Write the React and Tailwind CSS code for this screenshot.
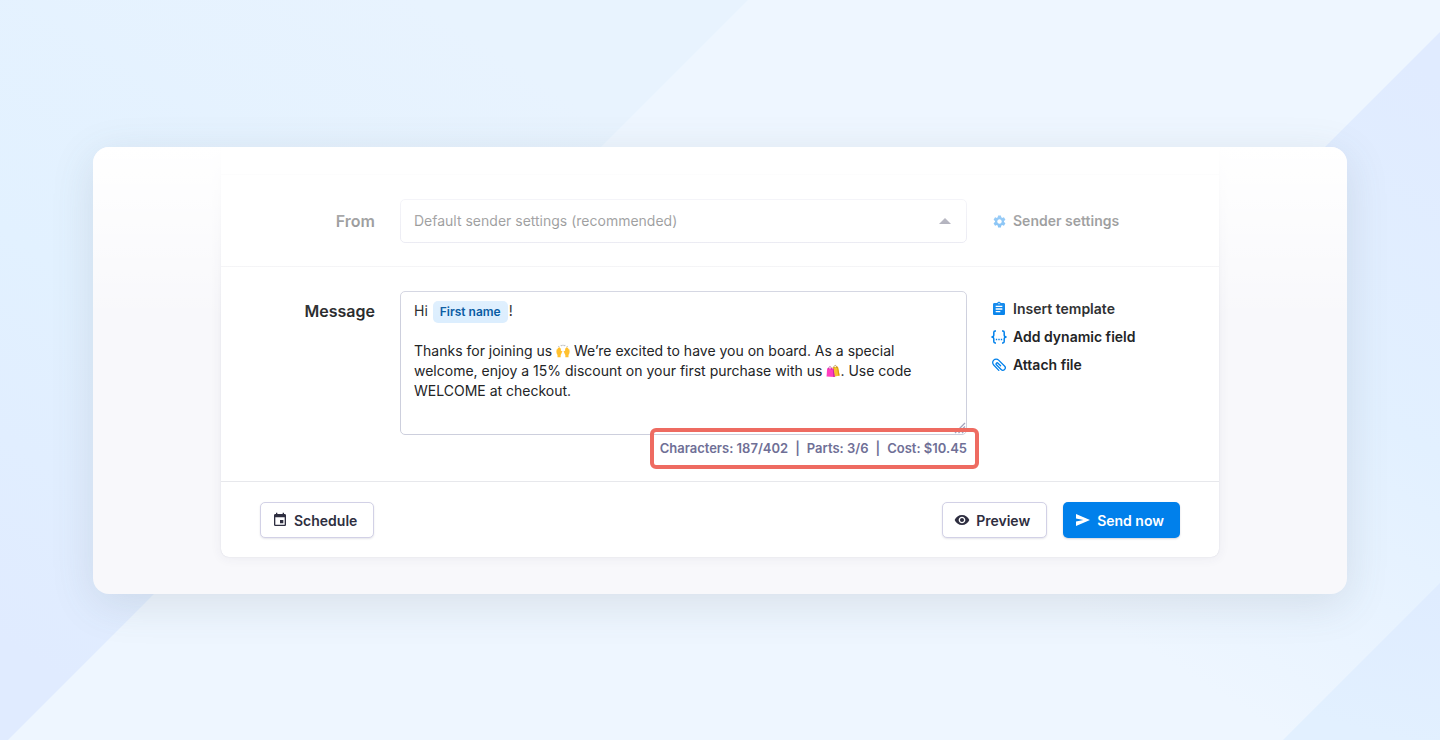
import React, { useState } from 'react';
import { MdAssignment, MdEvent, MdSettings, MdVisibility } from 'react-icons/md';

const Backdrop = () => (
    <svg className="absolute inset-0 w-full h-full" viewBox="0 0 1440 740" preserveAspectRatio="none" aria-hidden="true">
        <defs>
            <linearGradient id="bandLeft" gradientUnits="userSpaceOnUse" x1="0" y1="640" x2="420" y2="0">
                <stop offset="0" stopColor="#e0ebff" />
                <stop offset="0.45" stopColor="#e2f1ff" />
                <stop offset="1" stopColor="#e8f3fe" />
            </linearGradient>
            <linearGradient id="bandRight" gradientUnits="userSpaceOnUse" x1="1440" y1="80" x2="1100" y2="620">
                <stop offset="0" stopColor="#e0ebff" />
                <stop offset="0.5" stopColor="#e2f0ff" />
                <stop offset="1" stopColor="#eef6ff" />
            </linearGradient>
            <linearGradient id="cornerRight" gradientUnits="userSpaceOnUse" x1="1440" y1="590" x2="1400" y2="740">
                <stop offset="0" stopColor="#dfecff" />
                <stop offset="1" stopColor="#e2f0ff" />
            </linearGradient>
        </defs>
        <rect width="1440" height="740" fill="#eef6ff" />
        <path d="M0 0H748L8 740H0Z" fill="url(#bandLeft)" />
        <path d="M1440 32V740H732Z" fill="url(#bandRight)" />
        <path d="M1440 583V740H1283Z" fill="url(#cornerRight)" />
    </svg>
);

const BracesIcon = () => (
    <svg width="16" height="14" viewBox="0 0 16 14" fill="none" stroke="currentColor" strokeWidth="1.5" aria-hidden="true">
        <path d="M5 1H4Q2.8 1 2.8 2.4V5Q2.8 7 0.4 7Q2.8 7 2.8 9V11.6Q2.8 13 4 13H5" />
        <path d="M11 1H12Q13.2 1 13.2 2.4V5Q13.2 7 15.6 7Q13.2 7 13.2 9V11.6Q13.2 13 12 13H11" />
        <path d="M4.8 9.5H6.2M7.3 9.5H8.7M9.8 9.5H11.2" />
    </svg>
);

const ClipIcon = () => (
    <svg width="14" height="14" viewBox="0 0 14 14" fill="none" stroke="currentColor" strokeWidth="1.3" strokeLinecap="round" aria-hidden="true">
        <path d="M6.8 12.4L1.7 7A3.4 3.4 0 0 1 6.6 2.1L12.5 8A2.4 2.4 0 0 1 9.1 11.5L4.4 6.8A1.1 1.1 0 0 1 6 5.2L8.6 7.8" />
    </svg>
);

const SendIcon = () => (
    <svg width="16" height="16" viewBox="0 0 16 16" fill="currentColor" aria-hidden="true">
        <path d="M1 2L15 8L1 14V9.4L8.4 8L1 6.6Z" />
    </svg>
);

const RaisedHands = () => (
    <svg className="inline-block align-[-2px]" width="14" height="14" viewBox="0 0 15 14" role="img" aria-label="🙌">
        <path d="M2.6 1.6L3.3 2.6M5.4 0.5L5.8 1.8M7.5 0.3V1.6M9.6 0.5L9.2 1.8M12.4 1.6L11.7 2.6" stroke="#8d949c" strokeWidth="0.8" />
        <path d="M0.8 5.2Q1.3 4.6 1.7 5.3L2 3.6Q2.6 2.9 3 3.7L3.3 3Q3.9 2.6 4.2 3.4L4.5 4Q5.1 3.8 5.2 4.6L5.3 7.2Q6.4 6.2 6.9 7L5.6 10.2L5 11.2V13.6H1.6V11.2Q0.3 9.6 0.4 7.4Z" fill="#ffc02e" />
        <path d="M14.2 5.2Q13.7 4.6 13.3 5.3L13 3.6Q12.4 2.9 12 3.7L11.7 3Q11.1 2.6 10.8 3.4L10.5 4Q9.9 3.8 9.8 4.6L9.7 7.2Q8.6 6.2 8.1 7L9.4 10.2L10 11.2V13.6H13.4V11.2Q14.7 9.6 14.6 7.4Z" fill="#ffc02e" />
    </svg>
);

const ShoppingBags = () => (
    <svg className="inline-block align-[-2px]" width="14" height="14" viewBox="0 0 15 14" role="img" aria-label="🛍️">
        <path d="M7 2.8L12.8 2.4L14.6 11.8L8.6 13.2Z" fill="#f7c32e" />
        <path d="M12.8 2.4L14.6 11.8L13.2 12.1L11.8 2.5Z" fill="#d99a12" />
        <path d="M8.6 4V2Q9.8 -0.4 11.2 1.8V3.6" fill="none" stroke="#a5791e" strokeWidth="0.7" />
        <path d="M1.2 4L8 4.2L9.4 13.4L0.6 12.8Z" fill="#ff3fc0" />
        <path d="M7.2 4.2L8 4.2L9.4 13.4L8 13.3Z" fill="#c42a9c" />
        <path d="M2.8 5.2V3.4Q4.2 1 5.8 3.4V5.4" fill="none" stroke="#a71a86" strokeWidth="0.7" />
    </svg>
);

const SideLink = ({ icon, children }) => (
    <a href="#" className="flex items-center h-5 text-[14px] leading-5 font-semibold text-[#232426]">
        <span className="w-4 mr-[6px] flex justify-center text-[#0080eb]">{icon}</span>
        {children}
    </a>
);

const OutlineButton = ({ icon, children }) => (
    <button type="button" className="h-9 pl-[11px] pr-4 flex items-center gap-[6px] rounded-[5px] border border-[#d2d1e6] bg-white text-[14px] font-semibold text-[#2e2e40] shadow-[0_1px_2px_rgba(40,40,80,0.12)]">
        {icon}
        {children}
    </button>
);

const App = () => {
    const [sender, setSender] = useState('default');

    return (
        <main className="relative min-h-screen px-[93px] pt-[147px] pb-[146px] font-['Inter',sans-serif] text-[#232426]">
            <Backdrop />

            <section className="relative overflow-clip rounded-2xl bg-[#f8f8fb] px-32 pb-[37px] shadow-[0_10px_44px_rgba(80,90,100,0.14)]">
                <form className="rounded-b-lg bg-white pt-[27px] shadow-[0_1px_12px_rgba(50,50,93,0.07),0_0_1px_rgba(50,50,93,0.2)]" onSubmit={(e) => e.preventDefault()}>
                    {/* Sender */}
                    <div className="grid grid-cols-[155px_minmax(0,1fr)_228px] gap-x-6 border-y border-[#f0f0f3] pt-6 pb-[23px]">
                        <label htmlFor="sender" className="self-center pr-px text-right text-[16px] font-semibold">From</label>
                        <div className="relative">
                            <select
                                id="sender"
                                value={sender}
                                onChange={(e) => setSender(e.target.value)}
                                className="w-full h-11 appearance-none rounded-[5px] border border-[#dcdcea] bg-white px-[13px] pb-0.5 text-[14px]"
                            >
                                <option value="default">Default sender settings (recommended)</option>
                            </select>
                            <svg className="absolute right-4 top-[19px] pointer-events-none" width="12" height="6" viewBox="0 0 12 6" aria-hidden="true">
                                <path d="M6 0L12 6H0Z" fill="#55556e" />
                            </svg>
                        </div>
                        <div className="self-center">
                            <SideLink icon={<MdSettings size={15} />}>Sender settings</SideLink>
                        </div>
                    </div>

                    {/* Message */}
                    <div className="grid grid-cols-[155px_minmax(0,1fr)_228px] gap-x-6 border-b border-[#e7e8ec] pt-6 pb-[23px]">
                        <span id="message-label" className="pt-2 pr-px text-right text-[16px] leading-6 font-semibold">Message</span>
                        <div>
                            <div className="relative">
                                <div
                                    role="textbox"
                                    aria-multiline="true"
                                    aria-labelledby="message-label"
                                    contentEditable
                                    suppressContentEditableWarning
                                    className="min-h-36 rounded-[5px] border border-[#cdcfdd] bg-white px-[13px] py-[9px] text-[14px] leading-5"
                                >
                                    <p className="h-5">
                                        Hi <span className="inline-block rounded-[5px] bg-[#dceefe] mx-px -my-px px-[7px] text-[12px] leading-[22px] font-semibold text-[#00559e]">First name</span>!
                                    </p>
                                    <p className="mt-5">
                                        Thanks for joining us <RaisedHands /> We’re excited to have you on board. As a special welcome, enjoy a 15% discount on your first purchase with us <ShoppingBags />. Use code WELCOME at checkout.
                                    </p>
                                </div>
                                <svg className="absolute right-px bottom-px" width="12" height="12" viewBox="0 0 12 12" stroke="#a3a3bd" strokeWidth="1.3" aria-hidden="true">
                                    <path d="M1 11L11 1M4.5 11L11 4.5M8 11L11 8" />
                                </svg>
                            </div>
                            <div className="mt-[3px] flex justify-end">
                                <p className="relative flex gap-[7px] text-[13px] leading-5 font-semibold text-[#6f6f96]">
                                    <span>Characters: 187/402</span>
                                    <span>|</span>
                                    <span>Parts: 3/6</span>
                                    <span>|</span>
                                    <span>Cost: $10.45</span>
                                    <span className="absolute -top-[10px] -bottom-[11px] -left-[10px] -right-3 rounded-[6px] border-4 border-[#ee6b61]" />
                                </p>
                            </div>
                        </div>
                        <div className="flex flex-col gap-2 pt-2">
                            <SideLink icon={<MdAssignment size={16} />}>Insert template</SideLink>
                            <SideLink icon={<BracesIcon />}>Add dynamic field</SideLink>
                            <SideLink icon={<ClipIcon />}>Attach file</SideLink>
                        </div>
                    </div>

                    <div className="flex items-center px-[39px] pt-5 pb-[19px]">
                        <OutlineButton icon={<MdEvent size={16} />}>Schedule</OutlineButton>
                        <div className="ml-auto flex gap-4">
                            <OutlineButton icon={<MdVisibility size={16} />}>Preview</OutlineButton>
                            <button type="submit" className="h-9 pl-3 pr-4 flex items-center gap-[6px] rounded-[5px] bg-[#0080eb] text-[14px] font-semibold text-white shadow-[0_1px_2px_rgba(40,40,80,0.2)]">
                                <SendIcon />
                                Send now
                            </button>
                        </div>
                    </div>
                </form>

                {/* Fades the top of the form into the panel */}
                <div className="absolute inset-x-0 top-0 h-[173px] pointer-events-none bg-linear-to-b from-white to-white/0" />
            </section>
        </main>
    );
};

export default App;
